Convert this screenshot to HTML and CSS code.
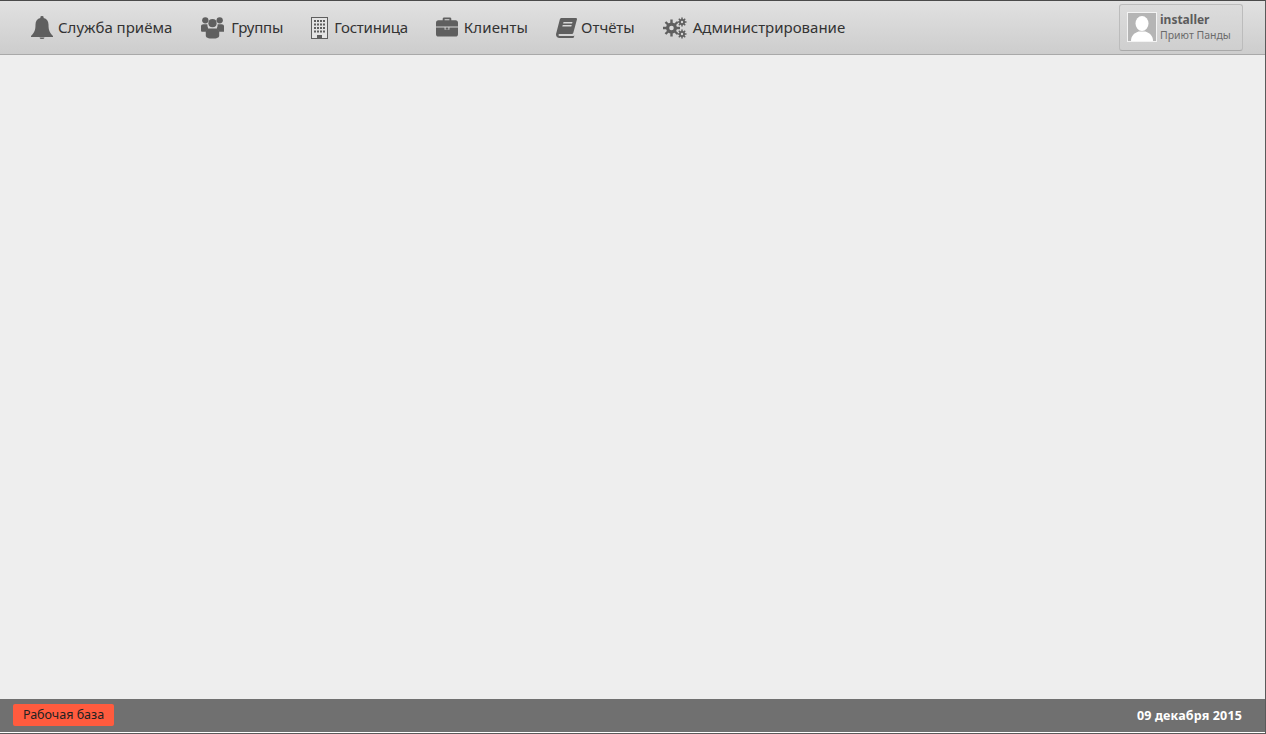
FILE: index.html
```html
<!DOCTYPE html>
<html lang="ru">
<head>
<meta charset="utf-8">
<title>Служба приёма</title>
<link rel="stylesheet" href="styles.css">
</head>
<body>
<div class="app">
  <header class="topbar">
    <nav class="menu">
      <a class="item"><svg class="ico i-bell" viewBox="0 0 22 23"><path d="M11 0a1.600 1.600 0 0 1 1.600 1.900C15.800 2.600 17.500 5 17.500 8.500c0 5.500 1 8 4.500 11.500v1H0v-1c3.500-3.500 4.500-6 4.500-11.500 0-3.500 1.700-5.900 4.900-6.600A1.600 1.600 0 0 1 11 0z"/><path d="M8.500 21.500h5a2.500 1.500 0 0 1-5 0z"/></svg><span>Служба приёма</span></a>
      <a class="item item-group"><svg class="ico i-group" viewBox="0 0 24 23"><circle cx="4.500" cy="4" r="3.300"/><circle cx="19.500" cy="4" r="3.300"/><circle cx="12" cy="7" r="4.300"/><path d="M0 10c0-1.200 1-2 2.500-2h3c.5 0 1 .1 1.300.4a6 6 0 0 0 .9 4.100 6.500 6.500 0 0 0-2.600 3.500H1.500C.5 16 0 15.400 0 14.500zM24 10c0-1.200-1-2-2.500-2h-3c-.5 0-1 .1-1.300.4a6 6 0 0 1-.9 4.100 6.500 6.500 0 0 1 2.600 3.500h4.600c1 0 1.500-.6 1.500-1.500z"/><path d="M8.500 12.500h7c2.200 0 3.500 1.700 3.500 4V20c0 1.800-2.500 3-7 3s-7-1.200-7-3v-3.500c0-2.300 1.300-4 3.500-4z"/></svg><span>Группы</span></a>
      <a class="item item-hotel"><svg class="ico i-hotel" viewBox="0 0 17 22"><rect class="wall" x="1" y="1" width="15" height="20"/><path fill-rule="evenodd" d="M0 0h17v22H0zM1 1v20h5v-3h5v3h5V1z"/><path d="M3 3h2v2H3zM6 3h2v2H6zM9 3h2v2H9zM12 3h2v2h-2zM3 6.500h2v2H3zM6 6.500h2v2H6zM9 6.500h2v2H9zM12 6.500h2v2h-2zM3 10h2v2H3zM6 10h2v2H6zM9 10h2v2H9zM12 10h2v2h-2zM3 13.500h2v2H3zM6 13.500h2v2H6zM9 13.500h2v2H9zM12 13.500h2v2h-2zM7 18.500h3V21H7z"/></svg><span>Гостиница</span></a>
      <a class="item item-case"><svg class="ico i-case" viewBox="0 0 23 20"><path fill-rule="evenodd" d="M7 3V1.500C7 .6 7.600 0 8.500 0h6c.9 0 1.500.6 1.500 1.500V3h4.500C22 3 23 4 23 5.500V9.500H0V5.500C0 4 1 3 2.500 3zm2-1v1h5V2z"/><path fill-rule="evenodd" d="M0 10.500h9V13h5v-2.500h9v7c0 1.500-1 2.500-2.500 2.500h-18C1 20 0 19 0 17.500zM10 10.500h3v2h-3z"/></svg><span>Клиенты</span></a>
      <a class="item"><svg class="ico i-book" viewBox="0 0 21 20"><path d="M5.500 0H20c.8 0 1.200.6 1 1.300l-3.600 13.200c-.3 1-1 1.500-2 1.500H3.500c-.8 0-1.200.6-1 1.200.2.500.6.800 1.200.8h13.800l.9-.5-.6 2c-.1.300-.4.500-.8.500H3.500C1.500 20 0 18.500 0 16.500c0-.5.100-1 .3-1.500L3.800 1.500C4 .6 4.700 0 5.500 0z"/><path class="cut" d="M7.500 4h9l-.4 1.500h-9zM6.700 7h9l-.4 1.500h-9z"/></svg><span>Отчёты</span></a>
      <a class="item"><svg class="ico i-gears" viewBox="0 0 24 22"><circle cx="8.500" cy="11" r="5.500"/><path class="teeth-l" d="M8.500 2.500v17M0 11h17M2.500 5l12 12M14.500 5l-12 12"/><circle class="cut" cx="8.500" cy="11" r="2.300"/><circle cx="19" cy="5" r="3"/><path class="teeth-s" d="M19 .5v9M14.500 5h9M15.800 1.800l6.400 6.400M22.200 1.800l-6.400 6.400"/><circle class="cut" cx="19" cy="5" r="1.200"/><circle cx="19" cy="17" r="3"/><path class="teeth-s" d="M19 12.500v9M14.500 17h9M15.800 13.800l6.400 6.400M22.200 13.800l-6.400 6.400"/><circle class="cut" cx="19" cy="17" r="1.200"/></svg><span>Администрирование</span></a>
    </nav>
    <div class="user">
      <div class="avatar"><svg viewBox="0 0 28 28"><ellipse cx="14" cy="10.500" rx="6.500" ry="7.500"/><path d="M3 28c0-5 3-8 7.500-9.500h7C22 20 25 23 25 28z"/></svg></div>
      <div class="who"><b>installer</b><small>Приют Панды</small></div>
    </div>
  </header>
  <main class="content"></main>
  <footer class="bottombar">
    <span class="base">Рабочая база</span>
    <span class="date">09 декабря 2015</span>
  </footer>
</div>
</body>
</html>
```
FILE: styles.css
```css
* { box-sizing: border-box; }
html, body { margin: 0; height: 100%; overflow: hidden; }
body { background: #fff; font-family: "Noto Sans", "Open Sans", sans-serif; }
.app {
  height: 734px;
  display: flex;
  flex-direction: column;
  border-top: 1px solid #4a4a4a;
  border-right: 1px solid #5a5a5a;
  border-bottom: 1px solid #5a5a5a;
}
.topbar {
  height: 54px;
  flex: none;
  display: flex;
  align-items: center;
  justify-content: space-between;
  padding: 0 22px 0 31px;
  background: linear-gradient(#e1e1e1, #cdcdcd);
  border-bottom: 1px solid #a9a9a9;
}
.menu { display: flex; align-items: center; gap: 28px; }
.item { display: flex; align-items: center; gap: 6px; color: #333; font-size: 15px; line-height: 20px; white-space: nowrap; }
.item span { padding-bottom: 2px; }
.item-group { margin-left: 1px; gap: 7px; letter-spacing: -.2px; }
.item-hotel { letter-spacing: -.22px; }
.item-case { letter-spacing: .12px; }
.ico { fill: #5f5f5f; flex: none; display: block; }
.i-bell { width: 22px; height: 23px; margin-right: -1px; }
.i-group { width: 23px; height: 23px; }
.i-hotel { width: 17px; height: 22px; }
.i-case { width: 22px; height: 20px; margin-bottom: 2px; }
.i-book { width: 21px; height: 20px; margin-top: 1px; margin-right: -2px; }
.i-gears { width: 24px; height: 22px; }
.wall { fill: #e4e4e4; }
.cut { fill: #d8d8d8; }
.teeth-l { stroke: #5f5f5f; stroke-width: 2.4; fill: none; }
.teeth-s { stroke: #5f5f5f; stroke-width: 1.5; fill: none; }
.user {
  width: 124px;
  height: 47px;
  display: flex;
  align-items: center;
  gap: 3px;
  padding: 0 7px;
  border: 1px solid #bcbcbc;
  border-bottom-color: #a9a9a9;
  border-radius: 3px;
  background: linear-gradient(#dcdcdc, #cfcfcf);
}
.avatar { width: 30px; height: 30px; margin-bottom: 1px; border: 1px solid #f3f3f3; background: #b5b5b5; flex: none; overflow: hidden; }
.avatar svg { display: block; width: 28px; height: 28px; fill: #fff; }
.who { display: flex; flex-direction: column; min-width: 0; padding-top: 1px; }
.who b { font-size: 12px; line-height: 15px; font-weight: 700; color: #5c5c5c; }
.who small { font-size: 10.500px; line-height: 17px; color: #6b6b6b; white-space: nowrap; }
.content { flex: 1; background: #eee; }
.bottombar {
  height: 33px;
  flex: none;
  margin-bottom: 1px;
  display: flex;
  align-items: center;
  justify-content: space-between;
  padding: 0 23px 1px 13px;
  background: #707070;
}
.base { width: 101px; height: 22px; background: #ff5b3e; border-radius: 2px; color: #222; font-size: 12.500px; line-height: 22px; text-align: center; }
.date { color: #fff; font-size: 12.500px; font-weight: 700; letter-spacing: .15px; }
```
